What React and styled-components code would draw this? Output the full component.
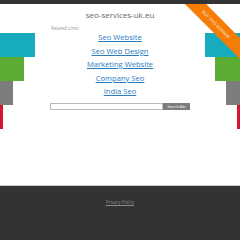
import styled, { createGlobalStyle } from 'styled-components'

const Global = createGlobalStyle`
  html, body {
    margin: 0;
    padding: 0;
    background: #fff;
  }
`

const Page = styled.div`
  position: relative;
  height: 240px;
  display: flex;
  flex-direction: column;
  overflow: hidden;
  font-family: 'Open Sans', 'Liberation Sans', sans-serif;
`

const TopBar = styled.div`
  position: relative;
  z-index: 2;
  height: 4px;
  background: #333;
`

const Main = styled.div`
  flex: 1;
  display: flex;
  justify-content: space-between;
`

const Side = styled.div`
  width: 35px;
  padding-top: 29px;
  display: flex;
  flex-direction: column;
  align-items: ${p => (p.$right ? 'flex-end' : 'flex-start')};
`

const Bar = styled.div`
  height: 24px;
  width: ${p => p.$w}px;
  background: ${p => p.$color};
`

const Center = styled.div`
  flex: 1;
  display: flex;
  flex-direction: column;
  align-items: center;
  padding-top: 6px;
`

const Domain = styled.h1`
  margin: 0;
  font-size: 8px;
  line-height: 10px;
  font-weight: 400;
  color: #666;
`

const Block = styled.div`
  width: 140px;
  margin-top: 5px;
  display: flex;
  flex-direction: column;
`

const Label = styled.span`
  font-size: 4.5px;
  line-height: 6px;
  color: #999;
  padding-left: 1px;
`

const LinkList = styled.div`
  display: flex;
  flex-direction: column;
  align-items: center;
`

const Link = styled.a`
  font-size: 7.6px;
  line-height: 13.5px;
  font-weight: 500;
  color: #2b7bbf;
  text-decoration: underline;
`

const SearchRow = styled.div`
  display: flex;
  margin-top: 4.5px;
  height: 7px;
`

const Input = styled.div`
  flex: 1;
  border: 1px solid #bbb;
  background: #fff;
`

const Button = styled.div`
  width: 27px;
  background: #7d7d7d;
  color: #fff;
  font-size: 3.5px;
  display: flex;
  align-items: center;
  justify-content: center;
`

const Footer = styled.footer`
  height: 55px;
  border-top: 1px solid #c8c8c8;
  background: #333;
  display: flex;
  justify-content: center;
  padding-top: 13px;
  box-sizing: border-box;
`

const FooterLink = styled.a`
  font-size: 4.5px;
  color: #8a8a8a;
  text-decoration: underline;
`

const Ribbon = styled.div`
  position: absolute;
  left: 161px;
  top: 17px;
  width: 110px;
  height: 15px;
  background: #f57d05;
  transform: rotate(45deg);
  display: flex;
  align-items: center;
  justify-content: center;
  color: #fff;
  font-size: 4px;
  letter-spacing: 0.2px;
`

const bars = [
  ['#17abc0', 35, 35],
  ['#5cab32', 24, 25],
  ['#7d7d7d', 13, 14],
  ['#d8142f', 3, 3]
]

const links = ['Seo Website', 'Seo Web Design', 'Marketing Website', 'Company Seo', 'India Seo']

const App = () => (
  <Page>
    <Global />
    <TopBar />
    <Main>
      <Side>
        {bars.map(([c, w]) => <Bar key={c} $color={c} $w={w} />)}
      </Side>
      <Center>
        <Domain>seo-services-uk.eu</Domain>
        <Block>
          <Label>Related Links</Label>
          <LinkList>
            {links.map(l => <Link key={l}>{l}</Link>)}
          </LinkList>
          <SearchRow>
            <Input />
            <Button>Search Ads</Button>
          </SearchRow>
        </Block>
      </Center>
      <Side $right>
        {bars.map(([c, , w]) => <Bar key={c} $color={c} $w={w} />)}
      </Side>
    </Main>
    <Footer>
      <FooterLink>Privacy Policy</FooterLink>
    </Footer>
    <Ribbon>BUY THIS DOMAIN</Ribbon>
  </Page>
)

export default App
